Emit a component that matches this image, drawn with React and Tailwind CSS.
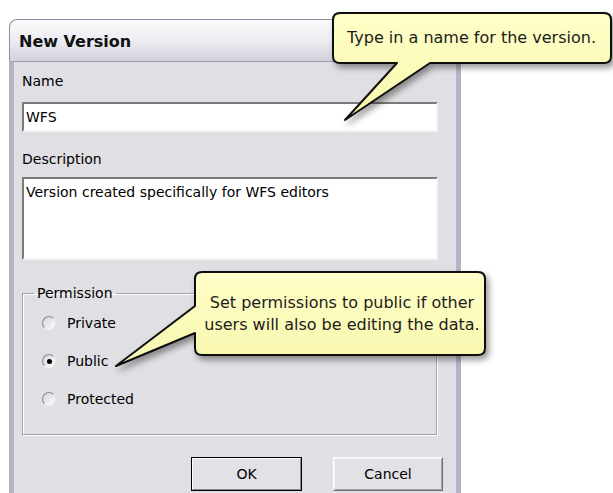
import React from "react";

const ui = { fontFamily: '"DejaVu Sans", Verdana, sans-serif' };

function Radio({ label, checked }) {
  return (
    <label className="flex h-[16px] items-center gap-[11px] text-[14px] leading-[16px] text-black">
      <span className="flex h-[14px] w-[14px] items-center justify-center rounded-full border border-t-[#8a8a8a] border-l-[#8a8a8a] border-r-[#e8e8e8] border-b-[#f4f4f4] bg-gradient-to-br from-[#d4d3d8] to-white">
        {checked && <span className="h-[5px] w-[5px] rounded-full bg-black" />}
      </span>
      {label}
    </label>
  );
}

function Button({ children, primary }) {
  return (
    <div
      className={
        primary
          ? "h-[34px] w-[111px] border border-black"
          : "h-[34px] w-[110px] border border-t-white border-l-white border-r-[#6e6e6e] border-b-[#6e6e6e]"
      }
    >
      <div
        className={
          "flex h-full w-full items-center justify-center border text-[14px] text-black bg-[#e2e1e5] " +
          (primary
            ? "border-t-white border-l-white border-r-[#8a8a8a] border-b-[#8a8a8a]"
            : "border-t-[#f2f2f2] border-l-[#f2f2f2] border-r-[#a8a8ac] border-b-[#a8a8ac]")
        }
      >
        {children}
      </div>
    </div>
  );
}

function Callouts() {
  return (
    <svg
      className="pointer-events-none absolute left-0 top-0"
      width="613"
      height="493"
      viewBox="0 0 613 493"
    >
      <defs>
        <filter id="tipShadow" x="-10%" y="-10%" width="130%" height="140%">
          <feDropShadow dx="3" dy="4" stdDeviation="3" floodColor="#000" floodOpacity="0.4" />
        </filter>
        <linearGradient id="tipFill" x1="0" y1="0" x2="0" y2="1">
          <stop offset="0" stopColor="#ffffc8" />
          <stop offset="1" stopColor="#f7f7ae" />
        </linearGradient>
      </defs>
      <path
        d="M340 13 H604 Q611 13 611 20 V56 Q611 63 604 63 H430 L345 120 L397 63 H340 Q333 63 333 56 V20 Q333 13 340 13 Z"
        fill="url(#tipFill)"
        stroke="#111"
        strokeWidth="2"
        strokeLinejoin="round"
        filter="url(#tipShadow)"
      />
      <path
        d="M202 272 H478 Q485 272 485 279 V348 Q485 355 478 355 H202 Q195 355 195 348 V333 L116 366 L195 306 V279 Q195 272 202 272 Z"
        fill="url(#tipFill)"
        stroke="#111"
        strokeWidth="2"
        strokeLinejoin="round"
        filter="url(#tipShadow)"
      />
    </svg>
  );
}

export default function App() {
  return (
    <div className="relative h-[493px] w-[613px] overflow-hidden bg-white" style={ui}>
      <div className="ml-[9px] w-[452px] pt-[19px]">
        {/* title bar */}
        <div className="flex h-[42px] items-center rounded-t-[8px] border border-b-0 border-[#8d8da4] bg-gradient-to-b from-[#fbfbfc] via-[#ececf1] to-[#d2d2dc] pl-[9px] pt-[2px]">
          <span className="text-[16px] font-bold text-[#111]">New Version</span>
        </div>
        {/* window body */}
        <div className="border-x-[5px] border-x-[#b4b4c8] border-t border-t-[#9c9cb2] bg-[#e0dfe3] pb-[20px] pl-[8px] pt-[11px]">
          <div className="text-[14px] leading-[16px] text-black">Name</div>
          <div className="mt-[13px] flex h-[30px] w-[416px] items-center border-2 border-t-[#7a7a7a] border-l-[#7a7a7a] border-r-[#f4f4f4] border-b-[#f4f4f4] bg-white pl-[2px] text-[14px] text-black">
            WFS
          </div>
          <div className="mt-[19px] text-[14px] leading-[16px] text-black">Description</div>
          <div className="mt-[10px] h-[83px] w-[416px] border-2 border-t-[#7a7a7a] border-l-[#7a7a7a] border-r-[#f4f4f4] border-b-[#f4f4f4] bg-white pl-[2px] pt-[5px] text-[14px] leading-[16px] text-black">
            Version created specifically for WFS editors
          </div>
          <fieldset className="mt-[25px] w-[415px] border border-[#a3a2a8] pb-[27px] pl-[11px] pt-[14px] shadow-[1px_1px_0_#fff,inset_1px_1px_0_#fff]">
            <legend className="px-[3px] text-[14px] leading-[16px] text-black">Permission</legend>
            <div className="flex flex-col gap-[22px] pl-[8px]">
              <Radio label="Private" />
              <Radio label="Public" checked />
              <Radio label="Protected" />
            </div>
          </fieldset>
          <div className="ml-[169px] mt-[22px] flex gap-[31px]">
            <Button primary>OK</Button>
            <Button>Cancel</Button>
          </div>
        </div>
      </div>

      <Callouts />
      <div className="absolute left-[347px] top-[28px] whitespace-nowrap text-[16px] leading-[20px] text-[#1c1c1c]">
        Type in a name for the version.
      </div>
      <div className="absolute left-[200px] top-[292px] w-[284px] whitespace-nowrap text-center text-[16px] leading-[22px] text-[#1c1c1c]">
        Set permissions to public if other
        <br />
        users will also be editing the data.
      </div>
    </div>
  );
}
